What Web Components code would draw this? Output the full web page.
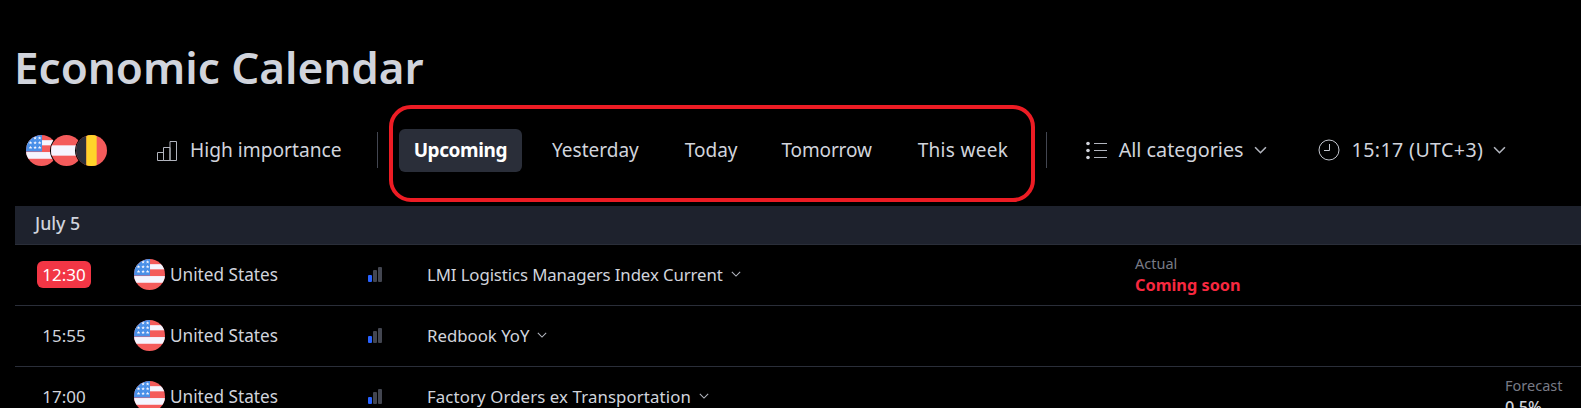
<!DOCTYPE html>
<html lang="en">
<head>
<meta charset="utf-8">
<title>Economic Calendar</title>
<style>
  html, body { margin:0; height:408px; overflow:hidden; background:#000; }
  body { font-family:"Noto Sans","Liberation Sans",sans-serif; color:#d1d4dc; }
</style>
</head>
<body>
<ec-calendar>
  <ec-title>Economic Calendar</ec-title>
  <ec-toolbar>
    <ec-flags slot="start"></ec-flags>
    <ec-tool slot="start" icon="bars" style="font-size:19.2px">High importance</ec-tool>
    <ec-tabs slot="tabs">
      <ec-tab active>Upcoming</ec-tab>
      <ec-tab style="margin-left:30px">Yesterday</ec-tab>
      <ec-tab style="margin-left:46px">Today</ec-tab>
      <ec-tab style="margin-left:44px;letter-spacing:-.15px">Tomorrow</ec-tab>
      <ec-tab style="margin-left:46px;letter-spacing:.3px">This week</ec-tab>
    </ec-tabs>
    <ec-tool slot="end" icon="list" caret style="font-size:19.8px">All categories</ec-tool>
    <ec-tool slot="end" icon="clock" caret style="font-size:19.6px;letter-spacing:.4px">15:17 (UTC+3)</ec-tool>
  </ec-toolbar>
  <ec-date>July 5</ec-date>
  <ec-row time="12:30" soon name="LMI Logistics Managers Index Current" style="--name-ls:-.1px">
    <ec-value slot="actual" label="Actual" soon>Coming soon</ec-value>
  </ec-row>
  <ec-row time="15:55" name="Redbook YoY"></ec-row>
  <ec-row time="17:00" name="Factory Orders ex Transportation" style="--name-ls:.12px">
    <ec-value slot="forecast" label="Forecast">0.5%</ec-value>
  </ec-row>
</ec-calendar>

<script>
(() => {
  const FONT = `"Noto Sans","Liberation Sans",sans-serif`;

  const stars = [0, 1, 2].map(r => [0, 1, 2].map(c =>
    `<path fill="#f5f5ff" transform="translate(${4.4 + c * 4.4} ${2.8 + r * 4.6})" d="M0-1.7.5-.5 1.7-.5.8.3 1.1 1.6 0 .9-1.1 1.6-.8.3-1.7-.5-.5-.5Z"/>`
  ).join('')).join('');

  const flags = {
    us: `<rect width="30" height="30" fill="#f45b5b"/>
         <rect y="5" width="30" height="5" fill="#f5f5ff"/>
         <rect y="16.5" width="30" height="6.5" fill="#f5f5ff"/>
         <rect width="15.5" height="16" fill="#4a90e8"/>${stars}`,
    at: `<rect width="30" height="30" fill="#f45b5b"/>
         <rect y="10" width="30" height="10" fill="#f5f5ff"/>`,
    be: `<rect width="30" height="30" fill="#f45b5b"/>
         <rect width="10" height="30" fill="#2b2f3a"/>
         <rect x="10" width="10" height="30" fill="#ffd42a"/>`
  };
  const flagSvg = (code, size) =>
    `<svg width="${size}" height="${size}" viewBox="0 0 30 30"><clipPath id="c"><circle cx="15" cy="15" r="15"/></clipPath><g clip-path="url(#c)">${flags[code]}</g></svg>`;

  const icons = {
    bars: `<svg width="21" height="21" viewBox="0 0 21 21" fill="none" stroke="#b2b5be" stroke-width="1"><path d="M.5 12.5h6v8h-6zM6.5 7.5h6.5v13H6.5zM13 1.5h6.5v19H13z"/></svg>`,
    list: `<svg width="21" height="19" viewBox="0 0 21 19" fill="none"><g fill="#d1d4dc"><circle cx="2" cy="2.5" r="1.8"/><circle cx="2" cy="9.5" r="1.8"/><circle cx="2" cy="16.5" r="1.8"/></g><path stroke="#b2b5be" d="M8 2.5h13M8 9.5h13M8 16.5h13"/></svg>`,
    clock: `<svg width="22" height="22" viewBox="0 0 22 22" fill="none" stroke="#c4c7cf" stroke-width="1"><circle cx="11" cy="11" r="10"/><path d="M11.5 5v6.5H6"/></svg>`
  };
  const chevron = (size, weight) =>
    `<svg width="${size}" height="${Math.round(size * .6)}" viewBox="0 0 12 7" fill="none" stroke="#b2b5be" stroke-width="${weight}"><path d="M1 1l5 5 5-5"/></svg>`;

  class Base extends HTMLElement {
    constructor() {
      super();
      this.attachShadow({mode: 'open'});
    }
  }

  class EcCalendar extends Base {
    constructor() {
      super();
      this.shadowRoot.innerHTML = `<style>:host{display:block;font-family:${FONT};}</style><slot></slot>`;
    }
  }

  class EcTitle extends Base {
    constructor() {
      super();
      this.shadowRoot.innerHTML = `<style>
        :host{display:block;height:105px;box-sizing:border-box;padding:38px 0 0 14px;}
        h1{margin:0;font-size:44px;line-height:58px;font-weight:600;color:#d1d4dc;}
      </style><h1><slot></slot></h1>`;
    }
  }

  class EcToolbar extends Base {
    constructor() {
      super();
      this.shadowRoot.innerHTML = `<style>
        :host{display:flex;align-items:flex-start;height:101px;padding-left:26px;}
        .start,.end{display:flex;align-items:center;height:90px;}
        .start{gap:50px;}
        .end{gap:51px;}
        .sep{width:1px;height:36px;background:#434651;margin-top:27px;}
        .sep.a{margin-left:35px;margin-right:11px;}
        .sep.b{margin-left:11px;margin-right:39px;}
      </style>
      <div class="start"><slot name="start"></slot></div>
      <div class="sep a"></div>
      <slot name="tabs"></slot>
      <div class="sep b"></div>
      <div class="end"><slot name="end"></slot></div>`;
    }
  }

  class EcFlags extends Base {
    constructor() {
      super();
      this.shadowRoot.innerHTML = `<style>
        :host{display:flex;align-items:center;}
        span{display:block;height:31px;width:31px;border-radius:50%;box-shadow:0 0 0 1px #000;background:#000;}
        span + span{margin-left:-6px;}
        svg{display:block;}
      </style>
      <span>${flagSvg('us', 31)}</span><span>${flagSvg('at', 31)}</span><span>${flagSvg('be', 31)}</span>`;
    }
  }

  class EcTool extends Base {
    constructor() {
      super();
      const caret = this.hasAttribute('caret') ? `<i>${chevron(13, 1.5)}</i>` : '';
      this.shadowRoot.innerHTML = `<style>
        :host{display:inline-flex;align-items:center;font-size:19px;line-height:24px;color:#d1d4dc;white-space:nowrap;}
        svg{display:block;}
        .ic{margin-right:12px;}
        i{display:block;margin-left:10px;}
      </style><span class="ic">${icons[this.getAttribute('icon')]}</span><slot></slot>${caret}`;
    }
  }

  class EcTabs extends Base {
    constructor() {
      super();
      this.shadowRoot.innerHTML = `<style>
        :host{display:flex;position:relative;box-sizing:border-box;width:646px;height:97px;padding:24px 0 0 10px;align-items:flex-start;}
        .mark{position:absolute;inset:0;border:4.5px solid #ed1c24;border-radius:22px;pointer-events:none;}
      </style><slot></slot><div class="mark"></div>`;
    }
  }

  class EcTab extends Base {
    constructor() {
      super();
      this.shadowRoot.innerHTML = `<style>
        :host{display:block;font-size:19px;line-height:43px;height:43px;color:#d1d4dc;white-space:nowrap;padding:0;}
        :host([active]){background:#2a2e39;border-radius:6px;padding:0 15px;color:#fff;font-weight:700;letter-spacing:-.4px;}
      </style><slot></slot>`;
    }
  }

  class EcDate extends Base {
    constructor() {
      super();
      this.shadowRoot.innerHTML = `<style>
        :host{display:block;margin-left:15px;height:39px;box-sizing:border-box;padding-left:20px;background:#1e222d;font-size:17.8px;line-height:34px;font-weight:500;color:#d1d4dc;border-bottom:1px solid #2a2e39;}
      </style><slot></slot>`;
    }
  }

  class EcRow extends Base {
    constructor() {
      super();
      const soon = this.hasAttribute('soon');
      this.shadowRoot.innerHTML = `<style>
        :host{display:grid;grid-template-columns:98px 255px 59px 708px 370px 1fr;align-items:center;margin-left:15px;height:61px;box-sizing:border-box;padding-bottom:2px;border-bottom:1px solid #2a2e39;font-size:16.8px;color:#d1d4dc;}
        .time{justify-self:center;padding:0 5.5px;line-height:27px;border-radius:6px;font-size:17px;}
        .time.soon{background:#f23645;color:#fff;}
        .country{display:flex;align-items:center;gap:5px;padding-left:21px;font-size:17.2px;}
        svg{display:block;}
        .imp{display:flex;align-items:flex-end;gap:1px;height:15px;}
        .imp b{display:block;width:4px;border-radius:1px;background:#434651;}
        .name{display:flex;align-items:center;gap:8px;letter-spacing:var(--name-ls,0);}
      </style>
      <span class="time ${soon ? 'soon' : ''}">${this.getAttribute('time')}</span>
      <span class="country">${flagSvg('us', 31)}United States</span>
      <span class="imp"><b style="height:7px;background:#2962ff"></b><b style="height:12px"></b><b style="height:15px"></b></span>
      <span class="name">${this.getAttribute('name')}${chevron(10, 1.3)}</span>
      <div><slot name="actual"></slot></div>
      <div><slot name="forecast"></slot></div>`;
    }
  }

  class EcValue extends Base {
    constructor() {
      super();
      const soon = this.hasAttribute('soon');
      this.shadowRoot.innerHTML = `<style>
        :host{display:block;line-height:22px;}
        .l{font-size:14.5px;color:#787b86;}
        .v{font-size:16.3px;line-height:23px;font-weight:${soon ? 700 : 500};color:${soon ? '#f7283f' : '#d1d4dc'};}
      </style><div class="l">${this.getAttribute('label')}</div><div class="v"><slot></slot></div>`;
    }
  }

  customElements.define('ec-calendar', EcCalendar);
  customElements.define('ec-title', EcTitle);
  customElements.define('ec-toolbar', EcToolbar);
  customElements.define('ec-flags', EcFlags);
  customElements.define('ec-tool', EcTool);
  customElements.define('ec-tabs', EcTabs);
  customElements.define('ec-tab', EcTab);
  customElements.define('ec-date', EcDate);
  customElements.define('ec-row', EcRow);
  customElements.define('ec-value', EcValue);
})();
</script>
</body>
</html>
